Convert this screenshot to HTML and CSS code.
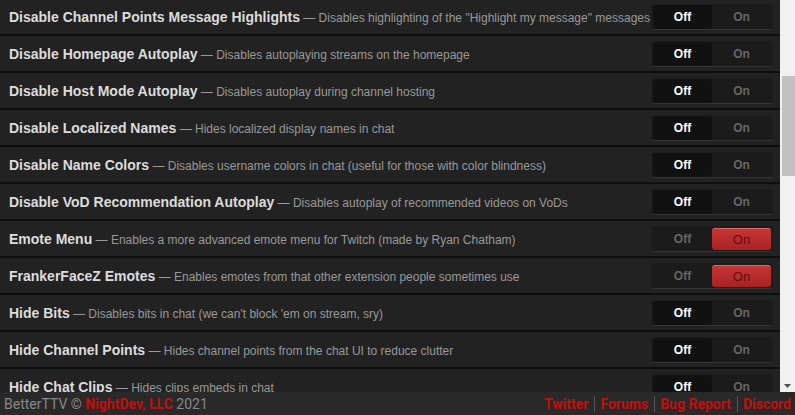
FILE: index.html
```html
<!DOCTYPE html>
<html lang="en">

<head>
  <meta http-equiv="Content-Type" content="text/html;charset=UTF-8" />
  <meta name="viewport" content="width=device-width, initial-scale=1.0" />
  <title>BetterTTV Settings</title>
  <link rel="stylesheet" href="styles.css">
</head>

<body>
  <div class="panel">
    <div class="scroll">
      <div class="options">
        <div class="option">
          <p class="label"><strong>Disable Channel Points Message Highlights</strong> — Disables highlighting of the "Highlight my message" messages</p>
          <div class="toggle"><span class="seg active">Off</span><span class="seg">On</span></div>
        </div>
        <div class="option">
          <p class="label"><strong>Disable Homepage Autoplay</strong> — Disables autoplaying streams on the homepage</p>
          <div class="toggle"><span class="seg active">Off</span><span class="seg">On</span></div>
        </div>
        <div class="option">
          <p class="label"><strong>Disable Host Mode Autoplay</strong> — Disables autoplay during channel hosting</p>
          <div class="toggle"><span class="seg active">Off</span><span class="seg">On</span></div>
        </div>
        <div class="option">
          <p class="label"><strong>Disable Localized Names</strong> — Hides localized display names in chat</p>
          <div class="toggle"><span class="seg active">Off</span><span class="seg">On</span></div>
        </div>
        <div class="option">
          <p class="label"><strong>Disable Name Colors</strong> — Disables username colors in chat (useful for those with color blindness)</p>
          <div class="toggle"><span class="seg active">Off</span><span class="seg">On</span></div>
        </div>
        <div class="option">
          <p class="label"><strong>Disable VoD Recommendation Autoplay</strong> — Disables autoplay of recommended videos on VoDs</p>
          <div class="toggle"><span class="seg active">Off</span><span class="seg">On</span></div>
        </div>
        <div class="option">
          <p class="label"><strong>Emote Menu</strong> — Enables a more advanced emote menu for Twitch (made by Ryan Chatham)</p>
          <div class="toggle"><span class="seg">Off</span><span class="seg on">On</span></div>
        </div>
        <div class="option">
          <p class="label"><strong>FrankerFaceZ Emotes</strong> — Enables emotes from that other extension people sometimes use</p>
          <div class="toggle"><span class="seg">Off</span><span class="seg on">On</span></div>
        </div>
        <div class="option">
          <p class="label"><strong>Hide Bits</strong> — Disables bits in chat (we can't block 'em on stream, sry)</p>
          <div class="toggle"><span class="seg active">Off</span><span class="seg">On</span></div>
        </div>
        <div class="option">
          <p class="label"><strong>Hide Channel Points</strong> — Hides channel points from the chat UI to reduce clutter</p>
          <div class="toggle"><span class="seg active">Off</span><span class="seg">On</span></div>
        </div>
        <div class="option">
          <p class="label"><strong>Hide Chat Clips</strong> — Hides clips embeds in chat</p>
          <div class="toggle"><span class="seg active">Off</span><span class="seg">On</span></div>
        </div>
      </div>

      <div class="scrollbar">
        <div class="thumb"></div>
        <svg class="arrow" width="7" height="4" viewBox="0 0 7 4">
          <polygon points="0,0 7,0 3.5,4" fill="#505050" />
        </svg>
      </div>
    </div>

    <footer>
      <div class="copy">BetterTTV © <a href="#">NightDev, LLC</a> 2021</div>
      <nav class="links">
        <a href="#">Twitter</a>
        <a href="#">Forums</a>
        <a href="#">Bug Report</a>
        <a href="#">Discord</a>
      </nav>
    </footer>
  </div>
</body>

</html>
```

FILE: styles.css
```css
body {
  margin: 0;
  padding: 0;
  background-color: #222;
  font-family: "Liberation Sans", Arial, sans-serif;
}

.panel {
  display: flex;
  flex-direction: column;
  height: 415px;
}

.scroll {
  display: flex;
  height: 392px;
}

/* Options list */
.options {
  flex: 1;
  overflow: hidden;
}

.option {
  display: flex;
  align-items: center;
  justify-content: space-between;
  height: 35px;
  padding: 0 7px 0 9px;
  background-color: #222;
  border-bottom: 2px solid #0e0e0e;
}

.option:first-child {
  margin-top: -1px;
}

.label {
  margin: 0;
  font-size: 12px;
  color: #999;
  white-space: nowrap;
}

.label strong {
  font-size: 14px;
  color: #dcdcdc;
}

/* Toggle */
.toggle {
  display: flex;
  flex-shrink: 0;
  width: 118px;
  height: 24px;
  padding: 0 1px;
  align-items: center;
  background-color: #1b1b1b;
  border: 1px solid #1d1d1d;
  border-bottom-color: #353535;
  border-radius: 4px;
}

.seg {
  flex: 1;
  height: 24px;
  line-height: 24px;
  text-align: center;
  font-size: 12px;
  font-weight: bold;
  color: #666;
  border-radius: 3px;
}

.seg.active {
  background-color: #111;
  color: #fff;
}

.seg.on {
  height: 21px;
  line-height: 21px;
  background: linear-gradient(#c63535, #a92222);
  border-top: 1px solid #d66;
  color: #5e0f0f;
  font-weight: normal;
  font-size: 13px;
}

/* Scrollbar */
.scrollbar {
  display: flex;
  flex-direction: column;
  align-items: flex-end;
  width: 15px;
  background-color: #f1f1f1;
}

.thumb {
  width: 13px;
  height: 100px;
  margin-top: 76px;
  background-color: #c1c1c1;
}

.arrow {
  margin: auto 4px 4px 0;
}

/* Footer */
footer {
  display: flex;
  justify-content: space-between;
  align-items: center;
  height: 23px;
  padding: 0 4px;
  background-color: #292929;
  font-family: Roboto, sans-serif;
  font-size: 14px;
  color: #888;
}

footer a {
  color: #c20e0e;
  font-weight: bold;
  text-decoration: none;
}

.links {
  display: flex;
}

.links a + a {
  margin-left: 6px;
  padding-left: 5px;
  border-left: 1px solid #555;
}
```
